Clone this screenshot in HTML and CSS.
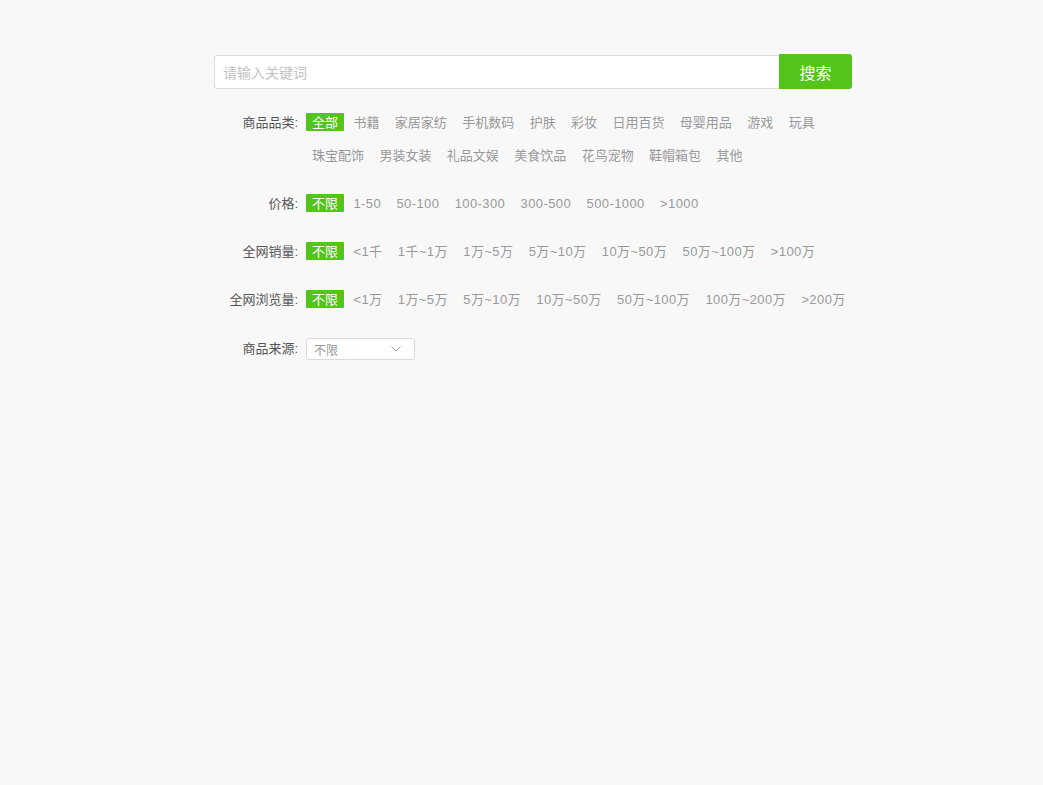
FILE: index.html
```html
<!DOCTYPE html>
<html lang="zh-CN">
<head>
<meta charset="utf-8">
<title>商品筛选</title>
<link rel="stylesheet" href="styles.css">
</head>
<body>
<div class="wrap">
  <div class="search">
    <input class="search-input" type="text" placeholder="请输入关键词">
    <button class="search-btn" type="button">搜索</button>
  </div>
  <div class="filters">
    <div class="row">
      <div class="label">商品品类:</div>
      <div class="opts wrapable">
        <span class="opt active">全部</span>
        <span class="opt">书籍</span>
        <span class="opt">家居家纺</span>
        <span class="opt">手机数码</span>
        <span class="opt">护肤</span>
        <span class="opt">彩妆</span>
        <span class="opt">日用百货</span>
        <span class="opt">母婴用品</span>
        <span class="opt">游戏</span>
        <span class="opt">玩具</span>
        <span class="opt">珠宝配饰</span>
        <span class="opt">男装女装</span>
        <span class="opt">礼品文娱</span>
        <span class="opt">美食饮品</span>
        <span class="opt">花鸟宠物</span>
        <span class="opt">鞋帽箱包</span>
        <span class="opt">其他</span>
      </div>
    </div>
    <div class="row">
      <div class="label">价格:</div>
      <div class="opts num">
        <span class="opt active">不限</span>
        <span class="opt">1-50</span>
        <span class="opt">50-100</span>
        <span class="opt">100-300</span>
        <span class="opt">300-500</span>
        <span class="opt">500-1000</span>
        <span class="opt">&gt;1000</span>
      </div>
    </div>
    <div class="row">
      <div class="label">全网销量:</div>
      <div class="opts num">
        <span class="opt active">不限</span>
        <span class="opt">&lt;1千</span>
        <span class="opt">1千~1万</span>
        <span class="opt">1万~5万</span>
        <span class="opt">5万~10万</span>
        <span class="opt">10万~50万</span>
        <span class="opt">50万~100万</span>
        <span class="opt">&gt;100万</span>
      </div>
    </div>
    <div class="row">
      <div class="label">全网浏览量:</div>
      <div class="opts num">
        <span class="opt active">不限</span>
        <span class="opt">&lt;1万</span>
        <span class="opt">1万~5万</span>
        <span class="opt">5万~10万</span>
        <span class="opt">10万~50万</span>
        <span class="opt">50万~100万</span>
        <span class="opt">100万~200万</span>
        <span class="opt">&gt;200万</span>
      </div>
    </div>
    <div class="row row-select">
      <div class="label">商品来源:</div>
      <div class="select">
        <span class="select-text">不限</span>
        <svg class="chev" width="10" height="6" viewBox="0 0 10 6"><path d="M0.5 0.5 L5 5 L9.5 0.5" fill="none" stroke="#a0a0a0" stroke-width="1"/></svg>
      </div>
    </div>
  </div>
</div>
</body>
</html>
```

FILE: styles.css
```css
html, body {
  margin: 0;
  padding: 0;
  background: #f8f8f8;
}
body {
  font-family: "Liberation Sans", "Noto Sans CJK SC", sans-serif;
  font-size: 13px;
  color: #666;
}
.wrap {
  width: 638px;
  margin-left: 214px;
  padding-top: 54px;
}
.search {
  display: flex;
  height: 35px;
}
.search-input {
  flex: 1;
  box-sizing: border-box;
  height: 34px;
  margin-top: 1px;
  border: 1px solid #dcdcdc;
  border-right: none;
  border-radius: 3px 0 0 3px;
  background: #fff;
  padding: 0 8px;
  font-family: "Noto Sans CJK SC", sans-serif;
  font-size: 14px;
  color: #333;
  outline: none;
}
.search-input::placeholder {
  color: #c2c2c2;
}
.search-btn {
  width: 73px;
  height: 35px;
  border: none;
  border-radius: 0 3px 3px 0;
  background: #52c41a;
  color: #fff;
  font-family: "Noto Sans CJK SC", sans-serif;
  font-size: 16px;
  padding: 0;
  cursor: pointer;
}
.filters {
  margin-top: 24px;
}
.row {
  display: flex;
  align-items: flex-start;
  margin-bottom: 30px;
}
.label {
  width: 84px;
  flex: none;
  text-align: right;
  line-height: 20px;
  height: 18px;
  color: #555;
  margin-right: 8px;
  white-space: nowrap;
}
.opts {
  display: flex;
  flex-wrap: nowrap;
  row-gap: 15px;
}
.opts.wrapable {
  flex-wrap: wrap;
}
.opts.num .opt {
  letter-spacing: 0.4px;
}
.opt {
  padding: 0 6px;
  margin-right: 3.4px;
  line-height: 20px;
  height: 18px;
  color: #999;
  white-space: nowrap;
  border-radius: 1px;
}
.opts.num .opt.active,
.opt.active {
  background: #52c41a;
  color: #fff;
  letter-spacing: 0;
}
.row-select .label {
  line-height: 22px;
  height: 22px;
}
.select {
  box-sizing: border-box;
  width: 109px;
  height: 22px;
  border: 1px solid #d9d9d9;
  border-radius: 3px;
  background: #fff;
  display: flex;
  align-items: center;
  justify-content: space-between;
  padding: 0 13px 0 7px;
}
.select-text {
  font-size: 12px;
  color: #999;
}
.chev {
  display: block;
}
```
